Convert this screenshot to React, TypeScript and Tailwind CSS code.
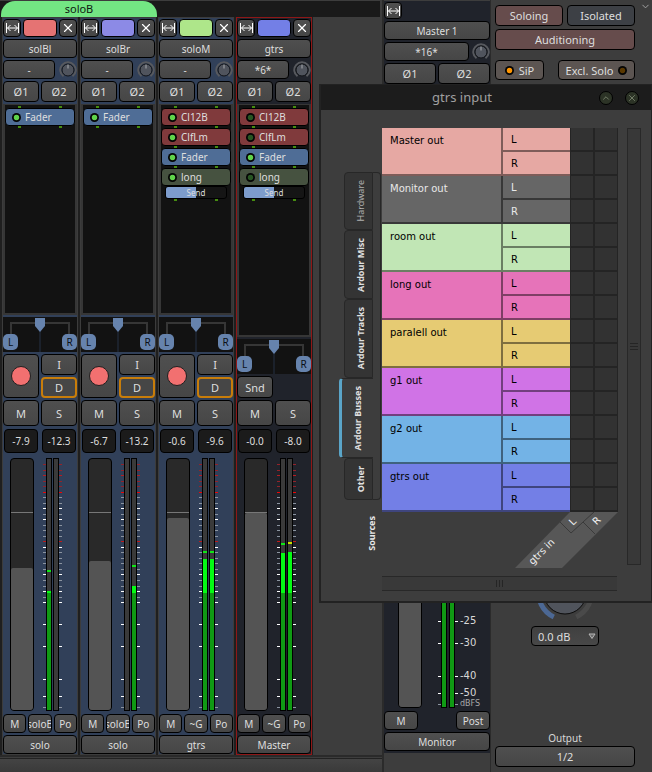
import React from 'react';
import clsx from 'clsx';
import { ChevronDown, ChevronUp, X } from 'lucide-react';

type Plugin = { name: string; kind: 'fader' | 'plugin' | 'send'; on: boolean };
type Channel = { peak?: number; level?: number; hot?: boolean };
type Strip = {
  name: string;
  color: string;
  input: string;
  output: string;
  group: string;
  bus?: boolean;
  plugins: Plugin[];
  peaks: [string, string];
  fader: number;
  meter: [Channel, Channel];
};

const METER_HEIGHT = 253;

const soloChain = (on: boolean): Plugin[] => [
  { name: 'Cl12B', kind: 'plugin', on },
  { name: 'ClfLm', kind: 'plugin', on },
  { name: 'Fader', kind: 'fader', on: true },
  { name: 'long', kind: 'send', on },
];

const strips: Strip[] = [
  {
    name: 'solBl', color: 'bg-[#e57373]', input: '-', output: 'solo', group: 'soloB',
    plugins: [{ name: 'Fader', kind: 'fader', on: true }],
    peaks: ['-7.9', '-12.3'], fader: 142, meter: [{ peak: 112, level: 133 }, {}],
  },
  {
    name: 'solBr', color: 'bg-[#8c8ae6]', input: '-', output: 'solo', group: 'soloB',
    plugins: [{ name: 'Fader', kind: 'fader', on: true }],
    peaks: ['-6.7', '-13.2'], fader: 149, meter: [{}, { peak: 107, level: 128 }],
  },
  {
    name: 'soloM', color: 'bg-[#aee68a]', input: '-', output: 'gtrs', group: '~G',
    plugins: soloChain(true),
    peaks: ['-0.6', '-9.6'], fader: 192, meter: [{ peak: 93, level: 101 }, { peak: 93, level: 101 }],
  },
  {
    name: 'gtrs', color: 'bg-[#737fe6]', input: '*6*', output: 'Master', group: '~G', bus: true,
    plugins: soloChain(false),
    peaks: ['-0.0', '-8.0'], fader: 197, meter: [{ peak: 85, level: 95 }, { peak: 84, level: 94, hot: true }],
  },
];

const sources = [
  { name: 'Master out', color: 'bg-[#e6a8a3]' },
  { name: 'Monitor out', color: 'bg-[#666666] text-[#e8e8e8]' },
  { name: 'room out', color: 'bg-[#c1e6b5]' },
  { name: 'long out', color: 'bg-[#e673b9]' },
  { name: 'paralell out', color: 'bg-[#e6cb73]' },
  { name: 'g1 out', color: 'bg-[#d073e6]' },
  { name: 'g2 out', color: 'bg-[#73b3e6]' },
  { name: 'gtrs out', color: 'bg-[#737fe6]' },
];

const tabs = [
  { name: 'Hardware', size: 'h-[58px]', dim: true },
  { name: 'Ardour Misc', size: 'h-[69px]' },
  { name: 'Ardour Tracks', size: 'h-[79px]' },
  { name: 'Ardour Busses', size: 'h-[80px]', active: true },
  { name: 'Other', size: 'h-[42px]' },
];

// [offset from the top of the meter, colour]
const ticks: [number, string][] = [
  [6, '#93232a'], [12, '#93232a'], [17, '#b81c20'], [23, '#93232a'], [28, '#93232a'], [34, '#f00505'],
  [39, '#8b94a0'], [45, '#8b94a0'], [50, '#fff'], [56, '#8b94a0'], [61, '#fff'], [67, '#8b94a0'],
  [72, '#8b94a0'], [78, '#8b94a0'], [83, '#c01818'], [89, '#fff'], [94, '#8b94a0'], [100, '#8b94a0'],
  [105, '#8b94a0'], [111, '#8b94a0'], [116, '#fff'], [122, '#8b94a0'], [128, '#8b94a0'], [133, '#fff'],
  [139, '#8b94a0'], [144, '#fff'], [166, '#fff'], [188, '#fff'], [221, '#fff'], [238, '#fff'], [249, '#8b94a0'],
];

const Button: React.FC<React.ButtonHTMLAttributes<HTMLButtonElement>> = ({ className, ...props }) => (
  <button
    type="button"
    className={clsx(
      'flex min-w-0 items-center justify-center overflow-hidden whitespace-nowrap rounded-[4px] border border-black text-[#dedede]',
      className
    )}
    {...props}
  />
);

const grey = 'bg-linear-to-b from-[#4f4f4f] to-[#464646]';

const WidthIcon = () => (
  <svg width="13" height="12" viewBox="0 0 13 12" fill="none" stroke="#fff" strokeWidth="1" className="shrink-0">
    <path d="M0.5 1v10M12.5 1v10M1.5 6h10M4.5 3l-3 3 3 3M8.5 3l3 3-3 3" />
  </svg>
);

const TrimKnob = () => (
  <svg width="18" height="18" viewBox="0 0 18 18" fill="none" className="shrink-0">
    <path d="M4.5 15.2a7.7 7.7 0 1 1 9 0" stroke="#57595e" strokeWidth="2" />
    <circle cx="9" cy="9" r="6" fill="#50545d" stroke="#121418" />
    <path d="M9 3.500v4" stroke="#a8abb0" strokeWidth="1" />
  </svg>
);

const Led: React.FC<{ color: string }> = ({ color }) => (
  <svg width="9" height="9" viewBox="0 0 9 9" className="shrink-0">
    <circle cx="4.500" cy="4.500" r="4.500" fill="#050505" />
    <circle cx="4.500" cy="4.500" r="2.700" fill={color} />
  </svg>
);

const Pips = () => (
  <div className="flex h-[2px] shrink-0 justify-between px-[13px]">
    <span className="w-[3px] bg-[#468c10]" />
    <span className="w-[3px] bg-[#468c10]" />
  </div>
);

const PluginEntry: React.FC<{ plugin: Plugin }> = ({ plugin }) => (
  <>
    <Button
      className={clsx(
        'h-[18px] w-full shrink-0 justify-start! gap-[4px] pl-[6px] text-[10px] leading-none',
        plugin.kind === 'fader' && 'bg-[#4f6d96]',
        plugin.kind === 'plugin' && 'bg-[#803a3c]',
        plugin.kind === 'send' && 'bg-[#465240]'
      )}
    >
      <Led color={plugin.on ? '#5fd34a' : '#275522'} />
      {plugin.name}
    </Button>
    {plugin.kind === 'send' && (
      <div className="mx-[4px] flex h-[13px] shrink-0 items-center justify-center rounded-[3px] border border-black bg-linear-to-r from-[#7d9ccc] from-50% to-[#151515] to-50% text-[8px] leading-none text-[#dedede]">
        Send
      </div>
    )}
    <Pips />
  </>
);

const Panner = () => (
  <svg viewBox="0 0 74 35" className="h-[35px] w-full shrink-0 bg-[#121212]" fontSize="10">
    <path d="M8 17V6H66V17" fill="none" stroke="#363636" strokeWidth="2" />
    <path d="M37 14v21" stroke="#243045" />
    <path d="M32 1h10v8l-5 6-5-6z" fill="#6683ad" />
    <rect x="0" y="17" width="15" height="16" rx="5" fill="#6683ad" />
    <rect x="59" y="17" width="15" height="16" rx="5" fill="#6683ad" />
    <text x="7.500" y="29" textAnchor="middle" fill="#0b0f16">L</text>
    <text x="66.500" y="29" textAnchor="middle" fill="#0b0f16">R</text>
  </svg>
);

const Fader: React.FC<{ label: string; height: number }> = ({ label, height }) => (
  <div className="relative flex h-[253px] w-[24px] flex-col justify-end overflow-hidden rounded-[4px] border border-black bg-[#292929]">
    <div className="absolute inset-x-0 top-[53px] h-px bg-[#777]" />
    <div className="relative rounded-t-[2px] bg-[#545454]" style={{ height }} />
    <input
      type="range"
      aria-label={`${label} level`}
      className="absolute inset-0 h-full w-full opacity-0 [direction:rtl] [writing-mode:vertical-lr]"
      max={251}
      defaultValue={height}
    />
  </div>
);

const Meter: React.FC<{ channels: Channel[]; wide?: boolean }> = ({ channels, wide }) => {
  const step = wide ? 8 : 7;
  const right = 3 + step + 6;
  return (
    <svg width={right + 3} height={METER_HEIGHT} className="shrink-0" shapeRendering="crispEdges">
      {ticks.map(([y, color]) => (
        <path key={y} d={`M0 ${y + 0.5}h3M${right} ${y + 0.5}h3`} stroke={color} />
      ))}
      {channels.map((c, i) => {
        const x = 3 + i * step;
        return (
          <g key={i}>
            <rect x={x} y="0" width="6" height={METER_HEIGHT} fill="#000" />
            <rect x={x + 1} y="1" width="4" height={METER_HEIGHT - 2} fill="#3a3a3a" />
            {c.peak !== undefined && (
              <rect x={x + 1} y={c.peak} width="4" height="2" fill={c.hot ? '#c8e000' : '#10e618'} />
            )}
            {c.level !== undefined && (
              <>
                <rect x={x + 1} y={c.level} width="4" height={METER_HEIGHT - 1 - c.level} fill="#109a14" />
                <rect x={x + 1} y={c.level} width="4" height={Math.max(2, 135 - c.level)} fill="#04fb14" />
              </>
            )}
          </g>
        );
      })}
    </svg>
  );
};

const MixerStrip: React.FC<{ strip: Strip }> = ({ strip }) => (
  <section
    className={clsx(
      'flex w-[76px] shrink-0 flex-col gap-[2px] border pt-px',
      strip.bus ? 'border-[#8f1717] bg-[#20232b]' : 'border-[#3c3c3c] bg-[#314059]'
    )}
  >
    <div className="flex h-[18px] gap-[2px]">
      <Button className={clsx('w-[18px]', grey)} aria-label="Strip width"><WidthIcon /></Button>
      <Button className={clsx('flex-1', strip.color)} aria-label="Strip colour" />
      <Button className={clsx('w-[18px]', grey)} aria-label="Hide strip">
        <X size={14} strokeWidth={2} color="#fff" className="shrink-0" />
      </Button>
    </div>
    <Button className={clsx('h-[19px] text-[10px]', grey)}>{strip.name}</Button>
    <div className="flex h-[19px] items-center gap-[4px]">
      <Button className={clsx('h-full flex-1 text-[10px]', grey)}>{strip.input}</Button>
      <TrimKnob />
    </div>
    <div className="grid h-[21px] grid-cols-2 gap-[2px] text-[11px]">
      <Button className={grey}>Ø1</Button>
      <Button className={grey}>Ø2</Button>
    </div>

    <div className="flex flex-1 flex-col border-2 border-t border-[#363636] bg-[#121212] pt-px">
      <Pips />
      {strip.plugins.map(plugin => (
        <PluginEntry key={plugin.name} plugin={plugin} />
      ))}
    </div>
    <Panner />

    {strip.bus ? (
      <Button className={clsx('h-[22px] w-[36px] text-[11px]', grey)}>Snd</Button>
    ) : (
      <div className="grid h-[44px] grid-cols-2 gap-[2px] text-[11px]">
        <Button className={grey} aria-label="Record">
          <span className="size-[20px] rounded-full border border-[#202020] bg-[#f27070]" />
        </Button>
        <div className="grid grid-rows-2 gap-[2px]">
          <Button className={grey}>I</Button>
          <Button className="border-2! border-[#c87d0a]! bg-[#464646]">D</Button>
        </div>
      </div>
    )}
    <div className="grid h-[26px] grid-cols-2 gap-[2px] text-[11px]">
      <Button className={grey}>M</Button>
      <Button className={grey}>S</Button>
    </div>
    <div className="grid h-[28px] grid-cols-2 gap-[4px] px-px pt-px pb-[3px] text-[10px]">
      {strip.peaks.map(peak => (
        <Button key={peak} className="bg-[#1b1b1b]">{peak}</Button>
      ))}
    </div>

    <div className="mb-px flex gap-[9px] pl-[7px]">
      <Fader label={strip.name} height={strip.fader} />
      <Meter channels={strip.meter} />
    </div>
    <div className="grid h-[19px] grid-cols-3 gap-[2px] text-[10px]">
      <Button className={grey}>M</Button>
      <Button className={grey}>{strip.group}</Button>
      <Button className={grey}>Po</Button>
    </div>
    <Button className={clsx('h-[19px] text-[10px]', grey)}>{strip.output}</Button>
  </section>
);

const MonitorStrip = () => (
  <section className="flex w-[109px] shrink-0 flex-col border-r border-l-2 border-[#2b2b2b] pt-px pb-[19px]">
    <div className="flex flex-1 flex-col gap-[2px] bg-[#20232b] pt-px pb-[2px]">
      <Button className={clsx('h-[17px] w-[18px]', grey)} aria-label="Strip width"><WidthIcon /></Button>
      <Button className={clsx('h-[19px] text-[10px]', grey)}>Master 1</Button>
      <div className="flex h-[19px] items-center gap-[3px]">
        <Button className={clsx('h-full flex-1 text-[10px]', grey)}>*16*</Button>
        <TrimKnob />
      </div>
      <div className="grid h-[21px] grid-cols-2 gap-[2px] text-[11px]">
        <Button className={grey}>Ø1</Button>
        <Button className={grey}>Ø2</Button>
      </div>
      <div className="mt-auto mb-px flex gap-[16px] pl-[14px]">
        <Fader label="Monitor" height={198} />
        <div className="flex gap-[2px]">
          <Meter channels={[{ level: 100 }, { level: 100 }]} wide />
          <div className="flex flex-col justify-end font-['DejaVu_Sans',sans-serif] text-[10px] leading-none text-[#d8d8d8]">
            <span className="mb-[12px]">-25</span>
            <span className="mb-[23px]">-30</span>
            <span className="mb-[7px]">-40</span>
            <span className="mb-[2px]">-50</span>
            <span className="text-[8px] leading-[8px] text-[#a8a8a8]">dBFS</span>
          </div>
        </div>
      </div>
      <div className="flex h-[19px] justify-between text-[10px]">
        <Button className={clsx('w-[34px]', grey)}>M</Button>
        <Button className={clsx('w-[34px]', grey)}>Post</Button>
      </div>
      <Button className={clsx('h-[19px] text-[10px]', grey)}>Monitor</Button>
    </div>
  </section>
);

const MonitorSection = () => (
  <section className="flex w-[161px] shrink-0 flex-col pt-[5px] pr-[17px] pb-[5px] pl-[4px] text-[11px]">
    <div className="grid grid-cols-2 gap-x-[4px] gap-y-[3px]">
      <Button className="h-[21px] bg-[#664c4c]">Soloing</Button>
      <Button className="h-[21px] bg-[#3d4045]">Isolated</Button>
      <Button className="col-span-2 h-[21px] bg-[#664c4c]">Auditioning</Button>
    </div>
    <div className="mt-[10px] flex justify-between">
      <Button className="h-[20px] w-[49px] gap-[5px] bg-[#5c5552]"><Led color="#ff9500" />SiP</Button>
      <Button className="h-[20px] w-[77px] gap-[5px] bg-[#5c5552]">Excl. Solo<Led color="#5a3800" /></Button>
    </div>

    <svg width="58" height="58" viewBox="0 0 58 58" fill="none" className="mx-auto mt-auto shrink-0" strokeWidth="5">
      <path d="M17.800 53A26.500 26.500 0 0 1 29 2.500" stroke="#4c6894" />
      <path d="M29 2.500A26.500 26.500 0 0 1 40.200 53" stroke="#4a4a4a" />
      <circle cx="29" cy="29" r="21" fill="#50545c" stroke="#0a0a0a" strokeWidth="1" />
    </svg>
    <div className="relative mx-auto mt-[4px]">
      <select
        aria-label="Monitor gain"
        className="block h-[20px] w-[68px] appearance-none rounded-[4px] border border-black bg-linear-to-b from-[#404040] to-[#484848] pl-[6px] text-[11px] leading-none text-[#dedede]"
      >
        <option>0.0 dB</option>
      </select>
      <svg width="8" height="7" viewBox="0 0 8 7" className="pointer-events-none absolute top-[7px] right-[3px]">
        <path d="M1 1h6L4 5.500z" fill="#6a6a6a" stroke="#b8b8b8" />
      </svg>
    </div>
    <div className="mt-[85px] h-[15px] text-center text-[10px] leading-[15px] text-[#d8d8d8]">Output</div>
    <Button className={clsx('h-[21px]', grey)}>1/2</Button>
  </section>
);

const RouteMatrix = () => (
  <table className="w-[236px] table-fixed border-separate border-spacing-0 font-['DejaVu_Sans',sans-serif] text-[10px] leading-none text-black">
    <colgroup>
      <col />
      <col className="w-[67px]" />
      <col className="w-[25px]" />
      <col className="w-[23px]" />
    </colgroup>
    <tbody>
      {sources.map(source =>
        ['L', 'R'].map((port, i) => (
          <tr key={source.name + port} className="h-[24px]">
            {i === 0 && (
              <th
                rowSpan={2}
                className={clsx('border-r-2 border-b-2 border-black/45 pt-[8px] pl-[8px] text-left align-top font-normal', source.color)}
              >
                {source.name}
              </th>
            )}
            <td className={clsx('border-b-2 border-black/45 pt-px pl-[8px]', source.color)}>{port}</td>
            <td className="border-r-2 border-b-2 border-l border-[#242424] bg-[#323232]" />
            <td className="border-r border-b-2 border-[#242424] bg-[#323232]" />
          </tr>
        ))
      )}
    </tbody>
  </table>
);

const InputDialog = () => (
  <div
    role="dialog"
    aria-label="gtrs input"
    className="absolute top-[84px] right-0 left-[319px] border border-b-2 border-l-2 border-[#222] bg-[#3d3d3d]"
  >
    <div className="relative flex h-[25px] items-center justify-end gap-[12px] bg-[#1c1c1c] pr-[12px]">
      <h1 className="absolute inset-x-0 pr-[48px] text-center text-[13px] text-[#a0a0a0]">gtrs input</h1>
      <button type="button" aria-label="Roll up" className="relative flex size-[14px] items-center justify-center rounded-full border border-black bg-[#2c3326] text-[#7f8a74]">
        <ChevronUp size={10} className="shrink-0" />
      </button>
      <button type="button" aria-label="Close" className="relative flex size-[14px] items-center justify-center rounded-full border border-black bg-[#2c3326] text-[#7f8a74]">
        <X size={10} className="shrink-0" />
      </button>
    </div>

    <div className="flex pb-[10px] pl-[18px]">
      <div className="flex w-[43px] flex-col pt-[62px]">
        <div className="flex">
          <div role="tablist" className="flex w-[34px] flex-col items-end">
            {tabs.map(tab => (
              <button
                key={tab.name}
                type="button"
                role="tab"
                aria-selected={!!tab.active}
                className={clsx(
                  'flex items-center justify-center rounded-l-[4px] border border-[#272727] text-[9px] leading-none whitespace-nowrap',
                  tab.size,
                  tab.active ? 'w-[34px] border-r-0 border-l-3 border-l-[#5aa5c8] bg-[#3d3d3d]' : 'w-[29px] bg-[#343434] pl-[4px]',
                  tab.dim ? 'text-[#b0b0b0]' : 'font-bold text-[#e0e0e0]'
                )}
              >
                <span className="rotate-180 [writing-mode:vertical-rl]">{tab.name}</span>
              </button>
            ))}
          </div>
          <div className="w-[8px] rounded-r-[4px] border border-l-0 border-[#272727]" />
        </div>
        <span className="mt-[16px] mr-[4px] rotate-180 self-end text-[9px] leading-[12px] font-bold text-[#e8e8e8] [writing-mode:vertical-rl]">
          Sources
        </span>
      </div>

      <div className="flex flex-1 flex-col pt-[18px]">
        <div className="flex gap-[9px]">
          <div>
            <RouteMatrix />
            <svg width="236" height="56" viewBox="0 0 236 56" fill="none" fontSize="10" className="block font-['DejaVu_Sans',sans-serif]">
              <path d="M188 0h48L180 56h-47z" fill="#575757" />
              <path d="M178 10l11 11L212 0M201 10l12 12" stroke="#3a3a3a" />
              <g fill="#f0f0f0" textAnchor="middle">
                <text transform="translate(193 12) rotate(-45)">L</text>
                <text transform="translate(217 11) rotate(-45)">R</text>
                <text transform="translate(162 42) rotate(-45)">gtrs in</text>
              </g>
            </svg>
          </div>
          <div className="mb-[3px] flex w-[14px] flex-col items-center justify-center gap-[2px] border border-[#282828] bg-[#383838]">
            <span className="h-px w-[8px] bg-[#252525]" />
            <span className="h-px w-[8px] bg-[#252525]" />
            <span className="h-px w-[8px] bg-[#252525]" />
          </div>
        </div>
        <div className="mt-[8px] mr-[34px] flex h-[15px] items-center justify-center gap-[2px] border-y border-[#282828] bg-[#393939]">
          <span className="h-[7px] w-px bg-[#252525]" />
          <span className="h-[7px] w-px bg-[#252525]" />
          <span className="h-[7px] w-px bg-[#252525]" />
        </div>
      </div>
    </div>
  </div>
);

export default function App() {
  return (
    <main className="relative flex min-h-screen w-full bg-[#3d3d3d] font-['Noto_Sans',sans-serif] leading-none text-[#dedede]">
      <div className="flex min-w-0 flex-1 flex-col">
        <div className="mr-[2px] h-[17px] border-t border-[#3d3d3d] bg-[#1a1a1a] pl-px">
          <button type="button" className="block h-[16px] w-[156px] rounded-t-[14px] bg-[#73e683] text-[11px] leading-[16px] text-[#101a12]">
            soloB
          </button>
        </div>
        <div className="flex flex-1">
          <div className="flex gap-[2px] bg-[#1f1f1f] pr-px pl-[2px]">
            {strips.map(strip => (
              <MixerStrip key={strip.name} strip={strip} />
            ))}
          </div>
        </div>
        <div className="h-[17px] border-t-2 border-[#2a2a2a] pt-px">
          <div className="h-full border-t border-[#222] bg-linear-to-b from-[#444] to-[#3a3a3a]" />
        </div>
      </div>
      <MonitorStrip />
      <MonitorSection />
      <ChevronDown size={11} color="#a8a8a8" className="absolute top-px right-px" />
      <InputDialog />
    </main>
  );
}
